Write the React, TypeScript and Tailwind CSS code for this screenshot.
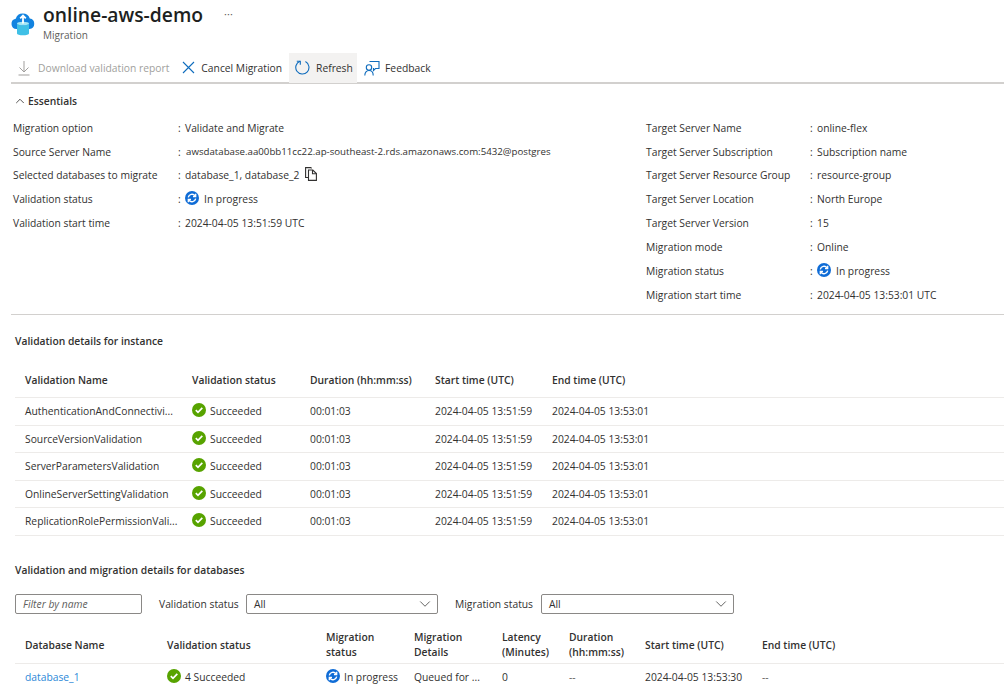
import { ChevronDown, ChevronUp } from "lucide-react";

const font = "font-['Open_Sans',sans-serif]";

const leftRows = [
  { label: "Migration option", value: "Validate and Migrate", h: "h-[24px]" },
  { label: "Source Server Name", value: "awsdatabase.aa00bb11cc22.ap-southeast-2.rds.amazonaws.com:5432@postgres", h: "h-[23px]", small: true },
  { label: "Selected databases to migrate", value: "database_1, database_2", h: "h-[24px]", copy: true },
  { label: "Validation status", value: "In progress", h: "h-[24px]", progress: true },
  { label: "Validation start time", value: "2024-04-05 13:51:59 UTC", h: "h-[24px]" },
];

const rightRows = [
  { label: "Target Server Name", value: "online-flex", h: "h-[24px]" },
  { label: "Target Server Subscription", value: "Subscription name", h: "h-[23px]" },
  { label: "Target Server Resource Group", value: "resource-group", h: "h-[24px]" },
  { label: "Target Server Location", value: "North Europe", h: "h-[24px]" },
  { label: "Target Server Version", value: "15", h: "h-[24px]" },
  { label: "Migration mode", value: "Online", h: "h-[24px]" },
  { label: "Migration status", value: "In progress", h: "h-[24px]", progress: true },
  { label: "Migration start time", value: "2024-04-05 13:53:01 UTC", h: "h-[24px]" },
];

const validations = [
  "AuthenticationAndConnectivi...",
  "SourceVersionValidation",
  "ServerParametersValidation",
  "OnlineServerSettingValidation",
  "ReplicationRolePermissionVali...",
];

function CloudIcon() {
  return (
    <svg width="24" height="25" viewBox="0 0 24 25">
      <path d="M5.500 18A5.200 5.200 0 0 1 4.700 7.700 7.400 7.400 0 0 1 18.800 7.500 5.300 5.300 0 0 1 18.500 18Z" fill="#1283e0" />
      <path d="M6 12.500c0 1 2.700 1.800 6 1.800s6-.8 6-1.800V22.500c0 1-2.700 1.800-6 1.800s-6-.8-6-1.800Z" fill="#3fc0e6" />
      <ellipse cx="12" cy="12.500" rx="6" ry="1.800" fill="#a5e6f6" />
      <path d="M12 12.500V4.500M9.200 7.300 12 4.500l2.800 2.800" fill="none" stroke="#fff" strokeWidth="1.800" />
    </svg>
  );
}

function DownloadIcon() {
  return (
    <svg width="14" height="16" viewBox="0 0 14 16" fill="none" stroke="#a19f9d" strokeWidth="1">
      <path d="M7 1v10.500M2.500 7.500 7 12l4.500-4.500M1.500 15h11" />
    </svg>
  );
}

function CancelIcon() {
  return (
    <svg width="13" height="13" viewBox="0 0 13 13" fill="none" stroke="#0f6cbd" strokeWidth="1.100">
      <path d="M1 1l11 11M12 1 1 12" />
    </svg>
  );
}

function RefreshIcon() {
  return (
    <svg width="15" height="15" viewBox="0 0 15 15" fill="none" stroke="#0f6cbd" strokeWidth="1.100">
      <path d="M5 1.300A6.600 6.600 0 1 0 10.400 1.600" />
      <path d="M1.800 1.200H5.300V4.700" />
    </svg>
  );
}

function FeedbackIcon() {
  return (
    <svg width="16" height="16" viewBox="0 0 16 16" fill="none" stroke="#0f6cbd" strokeWidth="1.100">
      <path d="M5.500 1.500h9.500v7h-3.500l-2 2v-2H9" />
      <circle cx="5" cy="7.500" r="2.700" />
      <path d="M.8 15.500c0-3 1.700-5 4.200-5s4.200 2 4.200 5" />
    </svg>
  );
}

function CopyIcon() {
  return (
    <svg width="12" height="14" viewBox="0 0 12 14" fill="none" stroke="#323130" strokeWidth="1.100">
      <path d="M3 10.500H.6V.6h5.200l.8.800" />
      <path d="M3.500 3h4.300l3.600 3.600v6.800H3.500Z" />
      <path d="M7.500 3v3.800h3.900" />
    </svg>
  );
}

function ProgressIcon() {
  return (
    <svg width="14" height="14" viewBox="0 0 14 14" className="shrink-0 -translate-y-[1px]">
      <circle cx="7" cy="7" r="7" fill="#0f6cd6" />
      <path d="M3.300 6.300A3.800 3.800 0 0 1 10 4.700M10.700 7.700A3.800 3.800 0 0 1 4 9.300" fill="none" stroke="#fff" strokeWidth="1.400" />
      <path d="M10.700 2.700v2.800H8M3.300 11.300V8.500H6" fill="none" stroke="#fff" strokeWidth="1.300" />
    </svg>
  );
}

function SuccessIcon() {
  return (
    <svg width="14" height="14" viewBox="0 0 14 14" className="shrink-0 -translate-y-[1px]">
      <circle cx="7" cy="7" r="7" fill="#57a300" />
      <path d="M3.800 7.200 6 9.400l4.300-4.500" fill="none" stroke="#fff" strokeWidth="1.700" />
    </svg>
  );
}

function EssentialRow({ row, labelW }: { row: any; labelW: string }) {
  return (
    <div className={`flex items-center ${row.h}`}>
      <div className={`${labelW} shrink-0`}>{row.label}</div>
      <div className="w-[7px] shrink-0">:</div>
      <div className={`flex items-center gap-[5px] whitespace-nowrap ${row.small ? "text-[9.700px] ml-[1px]" : ""}`}>
        {row.progress && <ProgressIcon />}
        <span>{row.value}</span>
        {row.copy && <span className="ml-[1px] -translate-y-[1px]"><CopyIcon /></span>}
      </div>
    </div>
  );
}

function Select({ w }: { w: string }) {
  return (
    <div className={`${w} h-[20px] flex items-center justify-between border border-[#8a8886] rounded-[2px] pl-[7px] pr-[3px] text-[#323130]`}>
      <span>All</span>
      <ChevronDown size={18} strokeWidth={1} className="text-[#323130]" />
    </div>
  );
}

export default function App() {
  return (
    <div className={`${font} w-[1004px] h-[689px] overflow-hidden bg-white text-[10.300px] leading-[14px] text-[#323130]`}>
      <div className="flex pl-[11px] h-[52px]">
        <div className="pt-[11px]"><CloudIcon /></div>
        <div className="ml-[8px]">
          <div className="flex items-start h-[28px]">
            <span className="text-[19.300px] leading-[30px] text-[#201f1e] font-semibold">online-aws-demo</span>
            <span className="ml-[21px] text-[11px] leading-[28px] text-[#605e5c]">···</span>
          </div>
          <div className="text-[#605e5c] text-[10px]">Migration</div>
        </div>
      </div>

      <div className="flex items-center h-[30px] ml-[11px] pl-[6px] pt-[1px]">
        <div className="flex items-center gap-[7px] text-[#a19f9d]">
          <DownloadIcon />
          <span>Download validation report</span>
        </div>
        <div className="flex items-center gap-[6px] ml-[13px]">
          <CancelIcon />
          <span>Cancel Migration</span>
        </div>
        <div className="flex items-center gap-[6px] ml-[7px] h-[30px] w-[68px] pl-[6px] bg-[#f3f2f1]">
          <RefreshIcon />
          <span>Refresh</span>
        </div>
        <div className="flex items-center gap-[5px] ml-[7px]">
          <FeedbackIcon />
          <span>Feedback</span>
        </div>
      </div>
      <div className="ml-[11px] h-[2px] bg-[#d2d0ce]" />

      <div className="flex items-center h-[32px] pl-[13px] pt-[1px]">
        <ChevronUp size={14} strokeWidth={1.400} className="mr-[1px]" />
        <span className="font-semibold">Essentials</span>
      </div>

      <div className="flex pl-[13px] h-[198px]">
        <div className="w-[633px] shrink-0">
          {leftRows.map((row) => (
            <EssentialRow key={row.label} row={row} labelW="w-[165px]" />
          ))}
        </div>
        <div>
          {rightRows.map((row) => (
            <EssentialRow key={row.label} row={row} labelW="w-[164px]" />
          ))}
        </div>
      </div>
      <div className="ml-[11px] h-px bg-[#d2d0ce]" />

      <div className="pl-[15px] pt-[19px] h-[48px] font-semibold">Validation details for instance</div>

      <div className="ml-[15px]">
        <div className="grid grid-cols-[167px_118px_125px_117px_1fr] items-center h-[35px] pl-[10px] font-semibold border-b border-[#edebe9]">
          <div>Validation Name</div>
          <div>Validation status</div>
          <div>Duration (hh:mm:ss)</div>
          <div>Start time (UTC)</div>
          <div>End time (UTC)</div>
        </div>
        {validations.map((name) => (
          <div key={name} className="grid grid-cols-[167px_118px_125px_117px_1fr] items-center h-[27.500px] pl-[10px] border-b border-[#edebe9]">
            <div className="whitespace-nowrap">{name}</div>
            <div className="flex items-center gap-[4px]"><SuccessIcon />Succeeded</div>
            <div>00:01:03</div>
            <div>2024-04-05 13:51:59</div>
            <div>2024-04-05 13:53:01</div>
          </div>
        ))}
      </div>

      <div className="pl-[15px] pt-[27px] h-[58px] font-semibold">Validation and migration details for databases</div>

      <div className="flex items-center pl-[15px]">
        <div className="w-[127px] h-[20px] flex items-center border border-[#8a8886] rounded-[2px] pl-[7px] italic text-[#605e5c]">Filter by name</div>
        <span className="ml-[17px] w-[87px]">Validation status</span>
        <Select w="w-[192px]" />
        <span className="ml-[17px] w-[86px]">Migration status</span>
        <Select w="w-[193px]" />
      </div>

      <div className="ml-[15px] mt-[14px]">
        <div className="grid grid-cols-[142px_159px_88px_88px_67px_76px_117px_1fr] items-center h-[36px] pl-[10px] font-semibold leading-[15px] border-b border-[#edebe9]">
          <div>Database Name</div>
          <div>Validation status</div>
          <div>Migration<br />status</div>
          <div>Migration<br />Details</div>
          <div>Latency<br />(Minutes)</div>
          <div>Duration<br />(hh:mm:ss)</div>
          <div>Start time (UTC)</div>
          <div>End time (UTC)</div>
        </div>
        <div className="grid grid-cols-[142px_159px_88px_88px_67px_76px_117px_1fr] items-center h-[26px] pl-[10px]">
          <div className="text-[#2b88d8]">database_1</div>
          <div className="flex items-center gap-[4px]"><SuccessIcon />4 Succeeded</div>
          <div className="flex items-center gap-[4px]"><ProgressIcon />In progress</div>
          <div>Queued for ...</div>
          <div>0</div>
          <div className="text-[#605e5c]">--</div>
          <div>2024-04-05 13:53:30</div>
          <div className="text-[#605e5c]">--</div>
        </div>
      </div>
    </div>
  );
}
